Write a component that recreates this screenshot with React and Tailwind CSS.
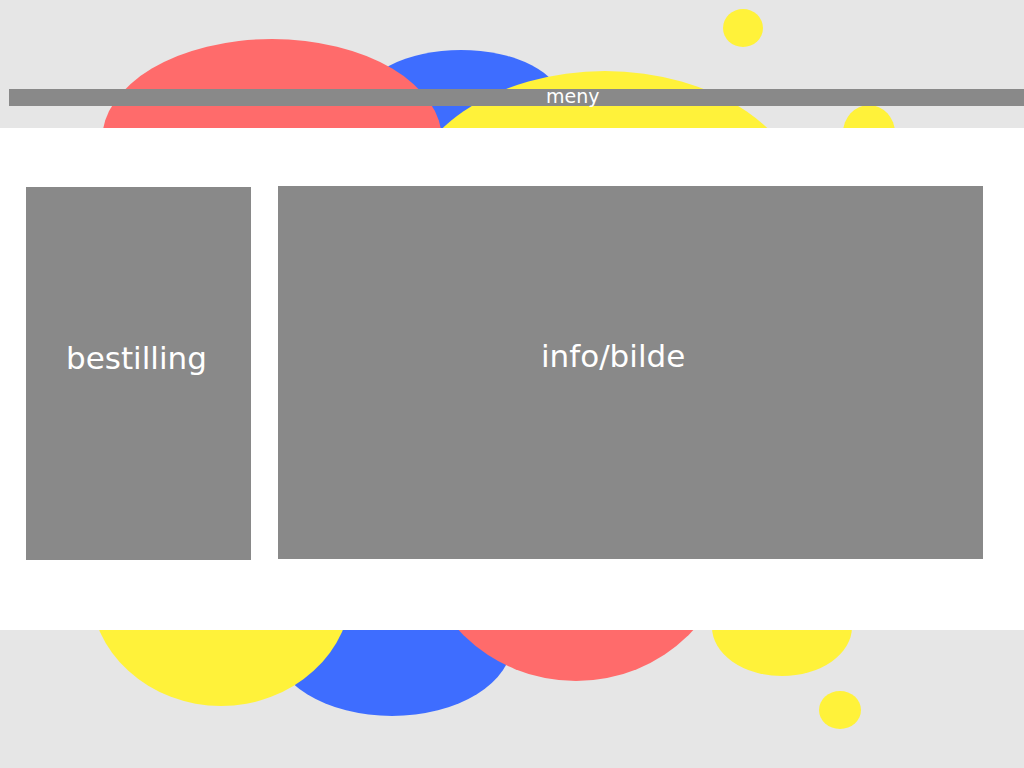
export default function App() {
  return (
    <div className="relative min-h-[768px] overflow-hidden bg-[#e6e6e6] font-['DejaVu_Sans',sans-serif]">
      {/* bakgrunnsbobler */}
      <svg className="absolute inset-0" width="1024" height="768" viewBox="0 0 1024 768">
        <ellipse cx="461" cy="102" rx="100" ry="52" fill="#3e6dff" />
        <ellipse cx="272" cy="140" rx="170" ry="101" fill="#ff6b6b" />
        <ellipse cx="605" cy="208" rx="200" ry="137" fill="#fff23a" />
        <ellipse cx="743" cy="28" rx="20" ry="19" fill="#fff23a" />
        <ellipse cx="869" cy="133" rx="26" ry="28" fill="#fff23a" />

        <ellipse cx="392" cy="642" rx="120" ry="74" fill="#3e6dff" />
        <ellipse cx="221" cy="586" rx="131" ry="120" fill="#fff23a" />
        <ellipse cx="576" cy="525" rx="159" ry="156" fill="#ff6b6b" />
        <ellipse cx="782" cy="627" rx="70" ry="49" fill="#fff23a" />
        <ellipse cx="840" cy="710" rx="21" ry="19" fill="#fff23a" />
      </svg>

      <div className="relative">
        <div className="h-[128px] pt-[89px] pl-[9px]">
          <div className="h-[17px] bg-[#898989] pl-[537px] text-[19px] leading-[14px] text-white">meny</div>
        </div>

        <div className="flex h-[502px] gap-[27px] bg-white pl-[26px] pt-[58px]">
          <div className="mt-px h-[373px] w-[225px] bg-[#898989] pl-[40px] pt-[148px] text-[31px] text-white">
            bestilling
          </div>
          <div className="h-[373px] w-[705px] bg-[#898989] pl-[263px] pt-[147px] text-[31px] text-white">
            info/bilde
          </div>
        </div>
      </div>
    </div>
  )
}
